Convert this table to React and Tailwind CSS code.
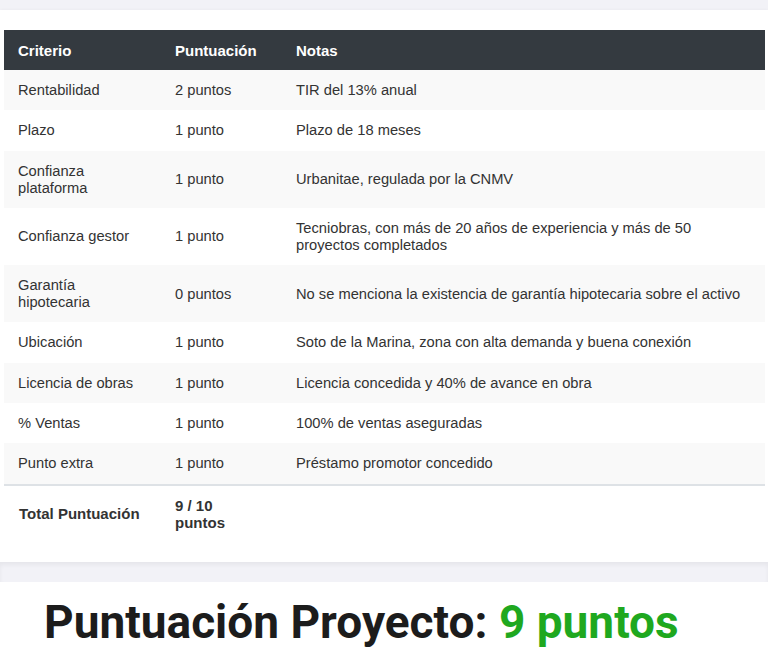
import React from 'react';

const rows = [
  { c: 'Rentabilidad', p: '2 puntos', n: 'TIR del 13% anual' },
  { c: 'Plazo', p: '1 punto', n: 'Plazo de 18 meses' },
  { c: 'Confianza plataforma', p: '1 punto', n: 'Urbanitae, regulada por la CNMV' },
  { c: 'Confianza gestor', p: '1 punto', n: 'Tecniobras, con más de 20 años de experiencia y más de 50 proyectos completados' },
  { c: 'Garantía hipotecaria', p: '0 puntos', n: 'No se menciona la existencia de garantía hipotecaria sobre el activo' },
  { c: 'Ubicación', p: '1 punto', n: 'Soto de la Marina, zona con alta demanda y buena conexión' },
  { c: 'Licencia de obras', p: '1 punto', n: 'Licencia concedida y 40% de avance en obra' },
  { c: '% Ventas', p: '1 punto', n: '100% de ventas aseguradas' },
  { c: 'Punto extra', p: '1 punto', n: 'Préstamo promotor concedido' },
];

const App = () => {
  return (
    <div className="min-h-screen bg-white" style={{ fontFamily: '"Liberation Sans", Arial, sans-serif' }}>
      <div className="h-[10px] bg-[#f2f2f7]" />
      <div className="bg-white pt-[20px] pb-[20px] pl-[4px] pr-[3px] shadow-[0_1px_4px_rgba(0,0,0,0.08)]">
        <table className="w-full border-collapse text-[14.7px] leading-[17px] text-[#333]">
          <thead>
            <tr className="bg-[#343a40] text-white font-bold text-left text-[15px]">
              <th className="w-[157px] pl-[14px] pr-2 py-[11.5px]">Criterio</th>
              <th className="w-[121px] pl-[14px] pr-2 py-[11.5px]">Puntuación</th>
              <th className="pl-[14px] pr-2 py-[11.5px]">Notas</th>
            </tr>
          </thead>
          <tbody>
            {rows.map((r, i) => (
              <tr key={r.c} className={i % 2 === 0 ? 'bg-[#f9f9f9]' : 'bg-white'}>
                <td className="pl-[14px] pr-6 pt-[12px] pb-[11.3px] align-middle">{r.c}</td>
                <td className="pl-[14px] pr-2 pt-[12px] pb-[11.3px] align-middle">{r.p}</td>
                <td className="pl-[14px] pr-[14px] pt-[12px] pb-[11.3px] align-middle">{r.n}</td>
              </tr>
            ))}
            <tr className="border-t-2 border-[#dee2e6] font-bold text-[15px]">
              <td className="pl-[15px] pr-2 py-[11px] align-middle">Total Puntuación</td>
              <td className="pl-[14px] pr-6 py-[11px] align-middle">9 / 10 puntos</td>
              <td className="py-[11px]" />
            </tr>
          </tbody>
        </table>
      </div>
      <div className="h-[20px] bg-[#f2f2f7] shadow-[inset_0_3px_4px_rgba(0,0,0,0.05)]" />
      <h1 className="pl-[44px] pt-[13px] text-[46px] leading-[54px] font-bold text-[#1c1c1c]" style={{ fontFamily: 'Roboto, "Noto Sans", sans-serif' }}>
        Puntuación Proyecto: <span className="text-[#1fa81f]">9 puntos</span>
      </h1>
    </div>
  );
};

export default App;
